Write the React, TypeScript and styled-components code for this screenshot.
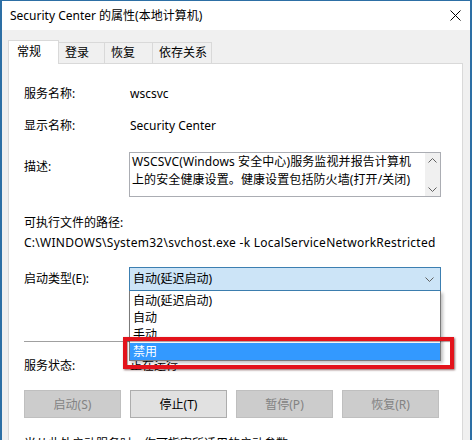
import React from "react";
import styled, { createGlobalStyle } from "styled-components";

const GlobalStyle = createGlobalStyle`
    html, body {
        margin: 0;
        padding: 0;
        background: #ffffff;
    }
    body {
        font-family: "Noto Sans", "Noto Sans CJK SC", sans-serif;
        font-size: 12px;
        color: #000000;
    }
`;

const Window = styled.div`
    width: 472px;
    height: 440px;
    box-sizing: border-box;
    overflow: hidden;
    background: #f0f0f0;
    border-top: 1px solid #2d6fa5;
    border-left: 2px solid #2d6fa5;
    border-right: 2px solid #2d6fa5;
    display: flex;
    flex-direction: column;
`;

const TitleBar = styled.div`
    height: 29px;
    flex: none;
    background: #ffffff;
    display: flex;
    align-items: center;
    justify-content: space-between;
    padding: 0 9px 0 8px;
`;

const TitleText = styled.span`
    font-size: 12px;
    line-height: 16px;
`;

const Body = styled.div`
    padding: 10px 7px 0 6px;
    flex: 1;
`;

const TabStrip = styled.div`
    display: flex;
    align-items: flex-end;
    height: 24px;
    margin-bottom: -1px;
`;

const Tab = styled.div<{ $active?: boolean; $w: number }>`
    box-sizing: border-box;
    width: ${(p) => p.$w}px;
    height: ${(p) => (p.$active ? 24 : 22)}px;
    padding-left: ${(p) => (p.$active ? 8 : 6)}px;
    border: 1px solid #d9d9d9;
    border-bottom: ${(p) => (p.$active ? "none" : "1px solid #d9d9d9")};
    margin-left: ${(p) => (p.$active ? 0 : -1)}px;
    background: ${(p) => (p.$active ? "#ffffff" : "#f0f0f0")};
    position: relative;
    z-index: ${(p) => (p.$active ? 2 : 1)};
    line-height: ${(p) => (p.$active ? 22 : 20)}px;
    white-space: nowrap;
`;

const Panel = styled.div`
    position: relative;
    background: #ffffff;
    border: 1px solid #d9d9d9;
    height: 400px;
    padding: 0 21px 0 15px;
`;

const FieldRow = styled.div<{ $top: number; $align?: string }>`
    display: grid;
    grid-template-columns: 105px 1fr;
    align-items: ${(p) => p.$align || "center"};
    margin-top: ${(p) => p.$top}px;
    line-height: 16px;
`;

const Label = styled.div<{ $pad?: number }>`
    padding-top: ${(p) => p.$pad || 0}px;
    white-space: nowrap;
`;

const Value = styled.div`
    padding-left: 1px;
    white-space: nowrap;
`;

const TextLine = styled.div<{ $top: number; $spacing?: number }>`
    margin-top: ${(p) => p.$top}px;
    line-height: 16px;
    letter-spacing: ${(p) => p.$spacing || 0}px;
    white-space: nowrap;
`;

const DescBox = styled.div`
    box-sizing: border-box;
    height: 45px;
    border: 1px solid #abadb3;
    display: flex;
`;

const DescText = styled.div`
    flex: 1;
    padding: 0 0 0 2px;
    line-height: 18px;
    letter-spacing: 0.1px;
    white-space: nowrap;
    overflow: hidden;
`;

const ScrollBar = styled.div`
    width: 15px;
    background: #f0f0f0;
    display: flex;
    flex-direction: column;
    justify-content: space-between;
    align-items: center;
    padding: 5px 0 4px;
`;

const Combo = styled.div`
    position: relative;
    box-sizing: border-box;
    height: 24px;
    background: #cce4f7;
    border: 1px solid #3c7fb1;
    display: flex;
    align-items: center;
    justify-content: space-between;
    padding: 0 6px 0 3px;
`;

const DropList = styled.div`
    position: absolute;
    top: 23px;
    left: -1px;
    right: -1px;
    z-index: 5;
    background: #ffffff;
    border: 1px solid #7a7a7a;
    border-top: none;
    padding-top: 1px;
    box-shadow: 2px 2px 3px rgba(0, 0, 0, 0.25);
`;

const DropItem = styled.div<{ $selected?: boolean }>`
    height: 17px;
    line-height: 17px;
    padding-left: 3px;
    background: ${(p) => (p.$selected ? "#3399ff" : "transparent")};
    color: ${(p) => (p.$selected ? "#ffffff" : "#000000")};
`;

const RedMark = styled.div`
    position: absolute;
    z-index: 6;
    left: -7px;
    top: 69px;
    width: 331px;
    height: 32px;
    box-sizing: border-box;
    border: 4px solid #e3131b;
    box-shadow: 1px 1px 2px rgba(60, 0, 0, 0.6), inset 1px 1px 1px rgba(60, 0, 0, 0.4);
`;

const Separator = styled.div`
    margin-top: 50px;
    height: 1px;
    background: #a0a0a0;
`;

const ButtonRow = styled.div`
    display: grid;
    grid-template-columns: repeat(4, 97px);
    gap: 9px;
    margin-top: 16px;
`;

const Button = styled.div<{ $disabled?: boolean }>`
    box-sizing: border-box;
    height: 28px;
    display: flex;
    align-items: center;
    justify-content: center;
    background: ${(p) => (p.$disabled ? "#cccccc" : "#e1e1e1")};
    border: 1px solid ${(p) => (p.$disabled ? "#bfbfbf" : "#adadad")};
    color: ${(p) => (p.$disabled ? "#838383" : "#000000")};
`;

const tabs = [
    { name: "常规", w: 51, active: true },
    { name: "登录", w: 47 },
    { name: "恢复", w: 49 },
    { name: "依存关系", w: 60 },
];

const options = ["自动(延迟启动)", "自动", "手动", "禁用"];

const buttons = [
    { label: "启动(S)", disabled: true },
    { label: "停止(T)" },
    { label: "暂停(P)", disabled: true },
    { label: "恢复(R)", disabled: true },
];

function Chevron({ up }: { up?: boolean }) {
    return (
        <svg width="9" height="5" viewBox="0 0 9 5">
            <path
                d={up ? "M0.5 4.5 L4.5 0.5 L8.5 4.5" : "M0.5 0.5 L4.5 4.5 L8.5 0.5"}
                fill="none"
                stroke="#606060"
                strokeWidth="1"
            />
        </svg>
    );
}

function CloseIcon() {
    return (
        <svg width="11" height="11" viewBox="0 0 11 11">
            <path d="M0.5 0.5 L10.5 10.5 M10.5 0.5 L0.5 10.5" stroke="#000" strokeWidth="1" />
        </svg>
    );
}

export default function App() {
    return (
        <>
            <GlobalStyle />
            <Window>
                <TitleBar>
                    <TitleText>Security Center 的属性(本地计算机)</TitleText>
                    <CloseIcon />
                </TitleBar>
                <Body>
                    <TabStrip>
                        {tabs.map((t) => (
                            <Tab key={t.name} $active={t.active} $w={t.w}>
                                {t.name}
                            </Tab>
                        ))}
                    </TabStrip>
                    <Panel>
                        <FieldRow $top={22}>
                            <Label>服务名称:</Label>
                            <Value>wscsvc</Value>
                        </FieldRow>
                        <FieldRow $top={16}>
                            <Label>显示名称:</Label>
                            <Value>Security Center</Value>
                        </FieldRow>
                        <FieldRow $top={18} $align="start">
                            <Label $pad={7}>描述:</Label>
                            <DescBox>
                                <DescText>
                                    WSCSVC(Windows 安全中心)服务监视并报告计算机
                                    <br />
                                    上的安全健康设置。健康设置包括防火墙(打开/关闭)
                                </DescText>
                                <ScrollBar>
                                    <Chevron up />
                                    <Chevron />
                                </ScrollBar>
                            </DescBox>
                        </FieldRow>
                        <TextLine $top={18}>可执行文件的路径:</TextLine>
                        <TextLine $top={4} $spacing={0.27}>
                            C:\WINDOWS\System32\svchost.exe -k LocalServiceNetworkRestricted
                        </TextLine>
                        <FieldRow $top={16}>
                            <Label>启动类型(E):</Label>
                            <Combo>
                                <span>自动(延迟启动)</span>
                                <Chevron />
                                <DropList>
                                    {options.map((o) => (
                                        <DropItem key={o} $selected={o === "禁用"}>
                                            {o}
                                        </DropItem>
                                    ))}
                                </DropList>
                                <RedMark />
                            </Combo>
                        </FieldRow>
                        <Separator />
                        <FieldRow $top={16}>
                            <Label>服务状态:</Label>
                            <Value>正在运行</Value>
                        </FieldRow>
                        <ButtonRow>
                            {buttons.map((b) => (
                                <Button key={b.label} $disabled={b.disabled}>
                                    {b.label}
                                </Button>
                            ))}
                        </ButtonRow>
                        <TextLine $top={18}>当从此处启动服务时，你可指定所适用的启动参数。</TextLine>
                    </Panel>
                </Body>
            </Window>
        </>
    );
}
